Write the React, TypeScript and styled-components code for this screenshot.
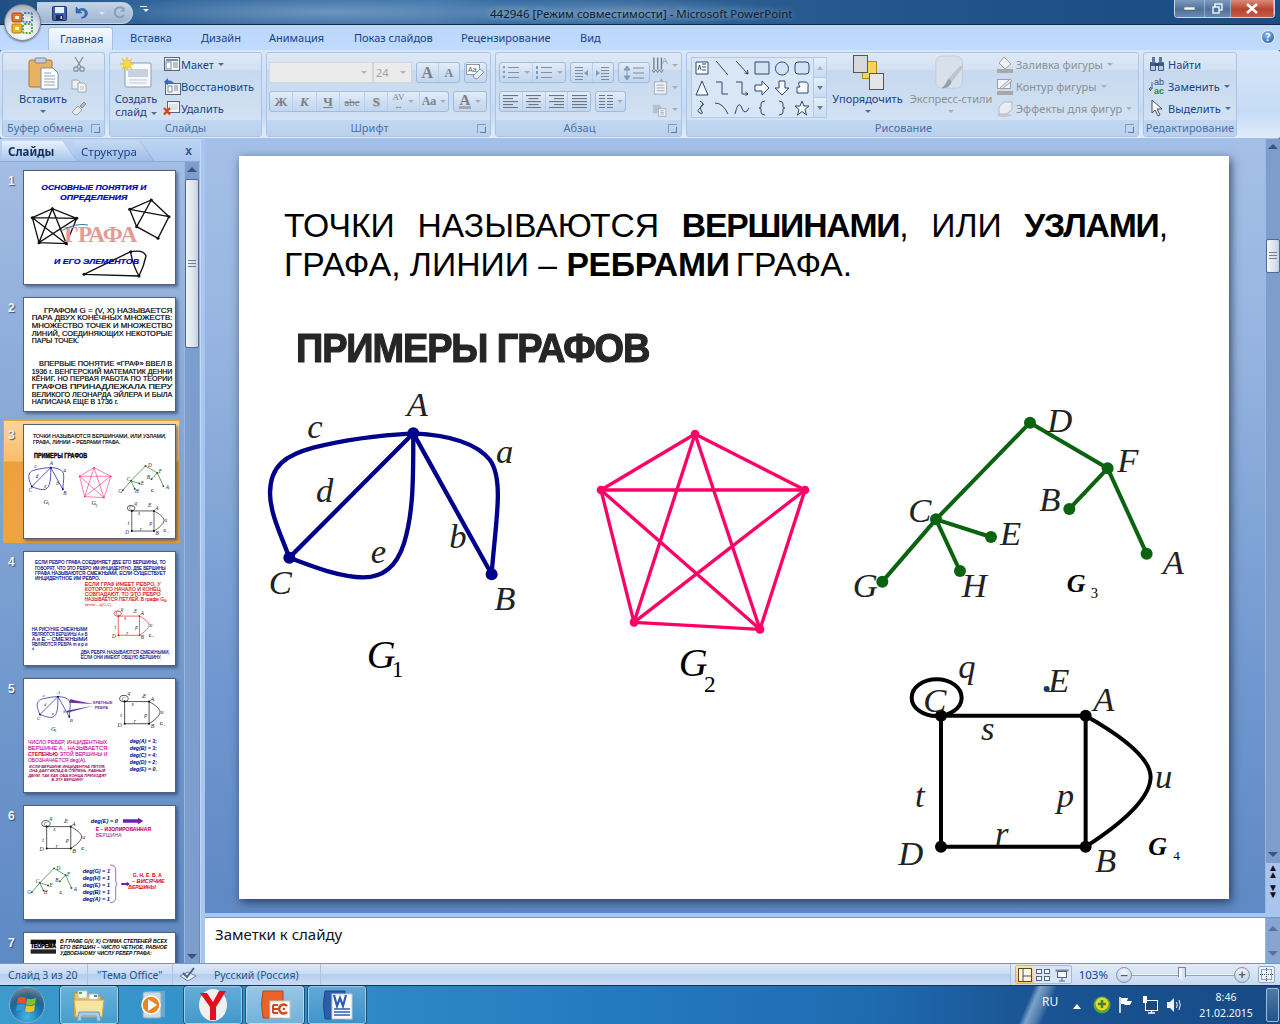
import React from "react";
import styled, { createGlobalStyle } from "styled-components";

const UI = `"Noto Sans", "Liberation Sans", sans-serif`;
const SERIF = `"Liberation Serif", serif`;
const SANS = `"Liberation Sans", sans-serif`;

const Global = createGlobalStyle`
  html, body { margin: 0; padding: 0; background: #2a6fb0; overflow: hidden; }
  #root { width: 1280px; height: 1024px; }
  * { box-sizing: border-box; }
`;

const Root = styled.div`
  width: 1280px; height: 1024px; display: flex; flex-direction: column; overflow: hidden; position: relative;
  font: 11px ${UI}; color: #15428b;
`;

/* ---------- title bar ---------- */
const TitleBar = styled.div`
  height: 25px; flex: none; display: flex; align-items: flex-start; border-bottom: 1px solid #12294a;
  background:
    radial-gradient(ellipse 240px 16px at 330px 12px, rgba(150,180,215,.55), transparent),
    radial-gradient(ellipse 170px 14px at 620px 12px, rgba(190,215,240,.35), transparent),
    linear-gradient(90deg, #1f4f83 0%, #34689c 14%, #3f74a8 34%, #2b5e92 55%, #1f5288 78%, #1b4c82 100%);
`;
const Orb = styled.div`
  position: absolute; left: 4px; top: 4px; width: 37px; height: 37px; border-radius: 50%; z-index: 3;
  display: flex; align-items: center; justify-content: center;
  background: radial-gradient(circle at 50% 75%, #ffffff 0%, #dfe6ee 45%, #aeb9c6 75%, #8594a6 100%);
  border: 1px solid #6f8096; box-shadow: 0 1px 2px rgba(0,0,0,.4);
`;
const Qat = styled.div`
  margin: 2px 0 0 37px; width: 96px; height: 22px; display: flex; align-items: center; padding-left: 15px; gap: 7px;
  border: 1px solid rgba(200,215,235,.7); border-left: none; border-radius: 0 11px 11px 0;
  background: linear-gradient(#c4d3e6, #9db4d0);
`;
const QatMore = styled.div`margin: 6px 0 0 6px; width: 9px; display: flex; flex-direction: column; gap: 2px; align-items: center; &::before { content: ""; width: 7px; height: 1px; background: #e6eef8; }`;
const TitleText = styled.div`
  margin: 6px 0 0 342px; font: 11.5px ${UI}; color: #0c1c33; line-height: 16px; white-space: nowrap;
  text-shadow: 0 0 6px rgba(255,255,255,.55);
`;
const WinCtl = styled.div`
  margin: 0 5px 0 auto; display: flex; width: 101px; height: 18px; border: 1px solid #c8d4e2; border-top: none;
  border-radius: 0 0 4px 4px; overflow: hidden;
`;
const WinBtn = styled.div<{ $w: number; $red?: boolean }>`
  width: ${p => p.$w}px; display: flex; align-items: center; justify-content: center;
  border-right: 1px solid rgba(255,255,255,.35);
  background: ${p => p.$red ? "linear-gradient(#d88a78, #b9432e 55%, #c9594a)" : "linear-gradient(#7d9cbd, #4e7199 55%, #6a8bb0)"};
`;

/* ---------- tabs ---------- */
const TabBar = styled.div`
  height: 25px; flex: none; display: flex; align-items: flex-end; padding-left: 48px; position: relative;
  background: linear-gradient(#bcd6f8, #bfdbff);
`;
const Tab = styled.div<{ $w: number; $on?: boolean }>`
  width: ${p => p.$w}px; height: 23px; padding-left: 12px; line-height: 22px; font-size: 11px; color: #15428b; flex: none;
  ${p => p.$on ? `background: linear-gradient(#f4f9ff, #dbe8f8); border: 1px solid #a3bfe2; border-bottom: none; border-radius: 3px 3px 0 0; padding-left: 11px; margin-right: 5px;` : ""}
`;
const Help = styled.div`
  position: absolute; right: 5px; top: 5px; width: 14px; height: 14px; border-radius: 50%; background: radial-gradient(circle at 40% 30%, #8ab7ea, #1c56a8);
  border: 1px solid #e8f1fb; color: #fff; font: bold 10px/12px ${UI}; text-align: center;
`;

/* ---------- ribbon ---------- */
const Ribbon = styled.div`
  height: 89px; flex: none; display: flex; gap: 4px; padding: 2px; border-bottom: 1px solid #a4c0e6;
  background: linear-gradient(#d7e6f9, #c5dbf5 70%, #e0ecfb);
  border-radius: 3px;
`;
const Group = styled.div<{ $w: number }>`
  width: ${p => p.$w}px; height: 85px; display: flex; flex-direction: column; position: relative; overflow: hidden;
  border: 1px solid #a9c4e6; border-radius: 3px;
  background: linear-gradient(#dfe9f6 0%, #d3e1f2 20%, #c7d9ef 21%, #d6e4f4 100%);
`;
const GroupBody = styled.div<{ $pl?: number }>`
  flex: 1; display: flex; padding-left: ${p => p.$pl ?? 0}px; min-height: 0;
`;
const GroupLabel = styled.div<{ $launch?: boolean }>`
  height: 16px; flex: none; text-align: center; line-height: 15px; font-size: 11px; color: #4a70a8;
  padding-right: ${p => p.$launch ? 18 : 0}px;
  background: linear-gradient(#c2d8f1, #b9d1ee);
`;
const GroupLabelLeft = styled(GroupLabel)`text-align: left; padding-left: 4px;`;
const Launcher = styled.div`
  position: absolute; right: 4px; bottom: 3px; width: 9px; height: 9px; border: 1px solid #7e9cc2; border-width: 1px 0 0 1px;
  &::after { content: ""; position: absolute; right: 0; bottom: 0; width: 5px; height: 5px; border-right: 1px solid #5d7fac; border-bottom: 1px solid #5d7fac; }
`;
const BigBtn = styled.div<{ $w: number; $off?: boolean }>`
  width: ${p => p.$w}px; flex: none; display: flex; flex-direction: column; align-items: center; padding-top: 2px;
  font-size: 11px; line-height: 13px; color: ${p => p.$off ? "#8b8f95" : "#15428b"}; white-space: nowrap;
`;
const BigIcon = styled.div`height: 36px; display: flex; align-items: center; justify-content: center; margin-bottom: 1px;`;
const Caret = styled.span<{ $c?: string }>`
  display: inline-block; width: 0; height: 0; border: 3px solid transparent; border-top: 3px solid ${p => p.$c ?? "#4a6da0"}; border-bottom: none; vertical-align: middle; margin-left: 4px;
`;
const CaretLine = styled.div`height: 12px; display: flex; align-items: center; justify-content: center; margin-left: -4px;`;
const SmallCol = styled.div<{ $ml?: number }>`display: flex; flex-direction: column; margin-left: ${p => p.$ml ?? 0}px;`;
const SmallRow = styled.div<{ $off?: boolean }>`
  height: 22px; display: flex; align-items: center; white-space: nowrap; font-size: 11px; color: ${p => p.$off ? "#8b8f95" : "#15428b"};
`;
const SmallIcon = styled.span<{ $w?: number }>`width: ${p => p.$w ?? 19}px; flex: none; display: flex; align-items: center; justify-content: center;`;

const Controls = styled.div<{ $pl: number }>`padding: 9px 0 0 ${p => p.$pl}px; display: flex; flex-direction: column; gap: 8px;`;
const CtlRow = styled.div<{ $gap?: number }>`display: flex; height: 21px; gap: ${p => p.$gap ?? 4}px;`;
const Combo = styled.div<{ $w: number }>`
  width: ${p => p.$w}px; height: 21px; background: #ebebeb; border: 1px solid #d0d6de; display: flex; align-items: center; justify-content: flex-end; padding-right: 5px;
  font-size: 11px; color: #a2a2a2;
`;
const ComboText = styled.span`margin-right: auto; padding-left: 2px;`;
const BtnBox = styled.div<{ $w: number }>`
  width: ${p => p.$w}px; height: 21px; display: flex; border: 1px solid #9dbce3; border-radius: 3px; overflow: hidden;
  background: linear-gradient(#e3edf9, #cfdff3 50%, #c3d7f0);
`;
const Cell = styled.div<{ $w?: number }>`
  ${p => p.$w ? `width:${p.$w}px;flex:none;` : "flex:1;"} display: flex; align-items: center; justify-content: center; border-right: 1px solid #b9cfea;
  color: #7c8087; font: 12px ${SERIF}; &:last-child { border-right: none; }
`;
const CellB = styled.span`font: bold 13px ${SERIF};`;
const CellI = styled.span`font: italic bold 13px ${SERIF};`;
const CellU = styled.span`font: bold 13px ${SERIF}; text-decoration: underline;`;
const CellS = styled.span`font: 11px ${SERIF}; text-decoration: line-through;`;
const CellSh = styled.span`font: bold 13px ${SERIF}; text-shadow: 1px 1px 1px #aaa;`;
const CellStack = styled.span`font: 9px/9px ${SERIF}; text-align: center;`;
const CellAa = styled.span`font: bold 12px ${SERIF};`;
const CellAbig = styled.span<{ $s: number }>`font: bold ${p => p.$s}px/14px ${SERIF}; color: #7c8087;`;
const ColorA = styled.span`font: bold 15px/12px ${SERIF}; border-bottom: 3px solid #a8a8a8; padding: 0 1px; color: #7c8087;`;

const ParaSide = styled.div`display: flex; flex-direction: column; padding: 1px 0 0 2px;`;
const SideBtn = styled.div`height: 22px; width: 26px; display: flex; align-items: center;`;

const Gallery = styled.div`
  width: 136px; height: 61px; margin-top: 4px; display: flex; border: 1px solid #b0c9e8; background: #d9e6f6; flex: none;
`;
const ShapeGrid = styled.div`display: grid; grid-template-columns: repeat(6, 20px); grid-auto-rows: 20px; flex: none; width: 121px;`;
const ShapeCell = styled.div`display: flex; align-items: center; justify-content: center;`;
const GalScroll = styled.div`flex: 1; display: flex; flex-direction: column; border-left: 1px solid #b0c9e8;`;
const GalBtn = styled.div`flex: 1; display: flex; align-items: center; justify-content: center; background: linear-gradient(#e6eff9,#c9dbf0); border-bottom: 1px solid #b0c9e8; &:last-child { border-bottom: none; }`;
const MiniTri = styled.span<{ $up?: boolean; $c?: string }>`
  width: 0; height: 0; border: 3px solid transparent;
  ${p => p.$up ? `border-bottom: 4px solid ${p.$c ?? "#a7b6c9"}; border-top: none;` : `border-top: 4px solid ${p.$c ?? "#5e7ea8"}; border-bottom: none;`}
`;

/* ---------- workspace ---------- */
const Workspace = styled.div`flex: 1; display: flex; min-height: 0;`;
const LeftPane = styled.div`width: 200px; flex: none; display: flex; flex-direction: column; background: #a6c3ec;`;
const PaneHead = styled.div`height: 23px; flex: none; display: flex; align-items: flex-end; padding-left: 2px; position: relative; background: linear-gradient(#bfd6f4, #a9c6ee); border-bottom: 1px solid #8cabd6;`;
const PaneTabWrap = styled.div<{ $ml?: number; $top?: boolean }>`
  filter: drop-shadow(0 0 .6px #4f70a4); margin-left: ${p => p.$ml ?? 0}px; position: relative; z-index: ${p => p.$top ? 2 : 1};
`;
const PaneTab = styled.div<{ $on?: boolean; $w: number }>`
  width: ${p => p.$w}px; height: 20px; font: ${p => p.$on ? "bold" : "normal"} 11.5px/22px ${UI}; color: ${p => p.$on ? "#15305c" : "#15428b"};
  padding-left: ${p => p.$on ? 6 : 7}px;
  clip-path: polygon(0 0, calc(100% - 14px) 0, 100% 100%, 0 100%);
  background: ${p => p.$on ? "linear-gradient(#e8f1fc, #a9c6ee)" : "linear-gradient(#c6d9f3, #9fbde8)"};
`;
const PaneClose = styled.div`position: absolute; right: 8px; top: 4px; font: bold 12px/16px ${SANS}; color: #30528a;`;
const PaneBody = styled.div`flex: 1; display: flex; min-height: 0; background: linear-gradient(#a3bee4, #8dacd9 25%, #6b94ca 75%, #5f89c3);`;
const ThumbList = styled.div`width: 184px; flex: none; overflow: hidden; padding-top: 8px;`;
const ThumbRow = styled.div<{ $on?: boolean }>`
  height: 115px; margin-bottom: 12px; display: flex; position: relative;
  ${p => p.$on ? `&::before { content: ""; position: absolute; left: 3px; right: 4px; top: -4px; bottom: -4px; border: 1px solid #e8a33c; background: linear-gradient(#ffd596 0%, #f9bd6a 33%, #eda03a 34%, #f0a441 100%); }` : ""}
`;
const ThumbNum = styled.div`
  width: 23px; padding: 4px 0 0 8px; font: bold 12px/14px ${SANS}; color: #eef3fa; position: relative; text-shadow: 1px 1px 1px rgba(40,60,100,.8);
`;
const Thumb = styled.div`
  width: 153px; height: 115px; background: #fff; flex: none; position: relative; border: 1px solid #52607a; box-shadow: 2px 2px 3px rgba(30,50,90,.55); overflow: hidden;
`;
const ThumbSvg = styled.svg`display: block; width: 151px; height: 113px;`;
const VScroll = styled.div`
  width: 15px; flex: none; display: flex; flex-direction: column; align-items: center; background: #7d9dcc; border-left: 1px solid #9bb8e0; position: relative;
`;
const SbArrow = styled.div<{ $up?: boolean; $c?: string }>`
  width: 15px; height: 14px; display: flex; align-items: center; justify-content: center; flex: none;
  &::before { content: ""; border: 5px solid transparent; ${p => p.$up ? `border-bottom: 5px solid ${p.$c ?? "#3d5478"}; border-top: none;` : `border-top: 5px solid ${p.$c ?? "#3d5478"}; border-bottom: none;`} }
`;
const SbThumb = styled.div<{ $h: number; $mt: number }>`
  width: 14px; height: ${p => p.$h}px; margin-top: ${p => p.$mt}px; flex: none; border: 1px solid #52688f; border-radius: 2px;
  background: linear-gradient(90deg, #f2f5fa, #dde4ee 60%, #c3cfe0); display: flex; align-items: center; justify-content: center;
`;
const Grip = styled.div`width: 8px; height: 8px; background: repeating-linear-gradient(#6d7e9a 0 1px, transparent 1px 3px);`;
const SbSpacer = styled.div`flex: 1;`;
const Splitter = styled.div`width: 5px; flex: none; background: #a9c6f0; border-left: 1px solid #c4d9f6;`;

const RightCol = styled.div`flex: 1; display: flex; flex-direction: column; min-width: 0;`;
const EditorRow = styled.div`height: 774px; flex: none; display: flex;`;
const Canvas = styled.div`flex: 1; padding: 17px 0 0 34px; background: linear-gradient(#a4c0e8, #97b5e0 25%, #7097cf 70%, #5f89c4);`;
const Slide = styled.div`
  width: 990px; height: 743px; background: #fff; box-shadow: 2px 3px 9px rgba(20,35,60,.75); padding: 50px 61px 0 45px; overflow: hidden;
`;
const SlideText = styled.p`
  margin: 0; font: 33.7px/39px ${SANS}; color: #000; text-align: justify;
`;
const Strong = styled.b`font-weight: bold; letter-spacing: -1.2px;`;
const TightB = styled.b`font-weight: bold; letter-spacing: -.3px; word-spacing: -3px;`;
const SlideHead = styled.h2`
  margin: 41px 0 0 12px; font: bold 41px/46px ${SANS}; color: #262626; letter-spacing: -1.2px; -webkit-text-stroke: 1.2px #262626; white-space: nowrap;
  transform: scaleX(.925); transform-origin: left center;
`;
const GraphSvg = styled.svg`display: block; width: 990px; height: 518px; margin: 10px 0 0 -45px;`;
const EditorScroll = styled(VScroll)`background: linear-gradient(#7d9dcc 0, #7d9dcc 93.6%, #a9c4ee 93.6%); border-left: 1px solid #9bb8e0;`;
const DoubleArrow = styled.div`
  height: 20px; width: 15px; flex: none; font: bold 10px/7px ${SANS}; color: #111; display: flex; flex-direction: column; align-items: center; justify-content: center;
`;
const BottomGap = styled.div`height: 12px; flex: none;`;
const HSplit = styled.div`height: 5px; flex: none; background: #a9c6f0; border-bottom: 1px solid #6e97d0;`;
const NotesRow = styled.div`flex: 1; display: flex; min-height: 0;`;
const Notes = styled.div`flex: 1; background: #fff; padding: 6px 0 0 10px; font: 15px/20px ${UI}; color: #111;`;
const NotesScroll = styled(VScroll)`background: #86a5d2; justify-content: space-between; padding: 3px 0;`;

/* ---------- status ---------- */
const Status = styled.div`
  height: 22px; flex: none; display: flex; align-items: stretch; border-top: 1px solid #6e97d0;
  background: linear-gradient(#dce8f8 0%, #c9dcf5 45%, #b6cfef 50%, #c9dcf5 100%); font-size: 10.5px; color: #274f8a;
`;
const StatusCell = styled.div<{ $w: number; $pl?: number; $gap?: number }>`
  width: ${p => p.$w}px; padding-left: ${p => p.$pl ?? 8}px; display: flex; align-items: center; gap: ${p => p.$gap ?? 0}px; border-right: 1px solid #a9c2e2; white-space: nowrap;
`;
const StatusRight = styled.div`margin-left: auto; width: 910px; display: flex; justify-content: flex-end;`;
const Zoomer = styled.div`width: 270px; display: flex; align-items: center; border-left: 1px solid #a9c2e2; padding-left: 4px; background: linear-gradient(#e0ebf9, #c7daf3);`;
const ViewBox = styled.div`width: 57px; height: 19px; flex: none; display: flex; border: 1px solid #9dbce3; border-radius: 2px; background: #d9e6f7;`;
const ViewBtn = styled.div<{ $on?: boolean }>`flex: 1; display: flex; align-items: center; justify-content: center; ${p => p.$on ? "background: linear-gradient(#ffe29c,#ffc65c);" : ""}`;
const ZoomPct = styled.span`width: 43px; text-align: right; padding-right: 8px; margin-left: 1px; font-size: 11.5px; color: #15428b; flex: none;`;
const RoundBtn = styled.div`width: 16px; height: 16px; border-radius: 50%; flex: none; border: 1px solid #7e97b8; background: radial-gradient(circle at 50% 30%, #f5f8fc, #b5c6dc); font: bold 13px/13px ${SANS}; text-align: center; color: #4d5d74;`;
const SliderTrack = styled.div`width: 102px; height: 2px; flex: none; background: #f2f6fc; border-bottom: 1px solid #8ba6c9; position: relative;`;
const SliderKnob = styled.div`position: absolute; left: 46px; top: -7px; width: 8px; height: 15px; background: linear-gradient(90deg,#fff,#cdd8e6); border: 1px solid #6d84a4; clip-path: polygon(0 0,100% 0,100% 65%,50% 100%,0 65%);`;
const FitBtn = styled.div`width: 17px; height: 17px; margin-left: 8px; flex: none; border: 1px solid #8ea9cc; border-radius: 2px; background: #eaf1fa; display: flex; align-items: center; justify-content: center;`;

/* ---------- taskbar ---------- */
const Taskbar = styled.div`
  height: 39px; flex: none; display: flex; align-items: stretch; border-top: 1px solid #16324f; position: relative; overflow: hidden;
  background:
    linear-gradient(113deg, transparent 79.8%, rgba(200,225,245,.55) 80.3%, rgba(255,255,255,.25) 81%, transparent 81.6%),
    linear-gradient(90deg, #3a9bcc 0%, #2f8cc8 25%, #2478bd 50%, #1f6bb0 68%, #1a5595 80%, #174a85 100%);
`;
const Start = styled.div`
  width: 36px; height: 36px; margin: 1px 15px 0 9px; flex: none; border-radius: 50%; display: flex; align-items: center; justify-content: center;
  background: radial-gradient(circle at 50% 85%, #45b6e8 0%, #1a6fa8 45%, #0c3558 80%, #0a2a46); border: 1px solid #7faecb; box-shadow: inset 0 10px 8px -6px rgba(255,255,255,.5);
`;
const TaskBtn = styled.div<{ $on?: boolean; $plain?: boolean; $w?: number; $mr?: number }>`
  width: ${p => p.$w ?? 58}px; margin-right: ${p => p.$mr ?? 4}px; display: flex; align-items: center; justify-content: center; flex: none;
  ${p => p.$plain ? "" : `border: 1px solid rgba(220,240,255,.55); outline: 1px solid rgba(10,40,70,.6); outline-offset: 0; border-radius: 3px;
  background: linear-gradient(rgba(255,255,255,${p.$on ? .5 : .25}), rgba(255,255,255,${p.$on ? .32 : .08}));`}
`;
const Tray = styled.div`margin-left: auto; display: flex; align-items: center; color: #fff;`;
const TrayLang = styled.div`width: 27px; font: 12px/14px ${UI}; color: #eef5fb; margin-bottom: 6px; margin-right: 4px;`;
const TrayIcon = styled.div`width: 24px; display: flex; align-items: center; justify-content: center;`;
const TrayTri = styled.div`width: 0; height: 0; border: 4px solid transparent; border-bottom: 5px solid #fff; border-top: none; margin-right: 9px; margin-top: 2px;`;
const Clock = styled.div`width: 78px; margin-left: 1px; text-align: center; font: 10.5px/16px ${UI}; color: #f2f7fc;`;
const ShowDesk = styled.div`width: 13px; height: 34px; margin: 0 1px; border: 1px solid #9cc0dc; border-radius: 2px; background: linear-gradient(rgba(255,255,255,.25), rgba(255,255,255,.05));`;

/* ---------- icons ---------- */
const OfficeLogo = () => (
  <svg width="27" height="27" viewBox="0 0 27 27">
    <rect x="3" y="4" width="10" height="9" rx="1.5" fill="#e8732c" stroke="#a5431a" />
    <rect x="6" y="7" width="4" height="3" fill="#fff2d8" />
    <rect x="14" y="4" width="9" height="9" rx="1.5" fill="none" stroke="#4e7fc0" strokeDasharray="2 1.2" strokeWidth="2" />
    <rect x="3" y="15" width="10" height="9" rx="1.5" fill="#f3b21f" stroke="#b07a10" />
    <rect x="6" y="18" width="4" height="3" fill="#fff2d8" />
    <rect x="14" y="15" width="9" height="9" rx="1.5" fill="none" stroke="#58a83a" strokeDasharray="2 1.2" strokeWidth="2" />
  </svg>
);
const SaveI = () => (
  <svg width="15" height="15" viewBox="0 0 15 15"><rect x=".5" y=".5" width="14" height="14" rx="1" fill="#3f5fa8" stroke="#1f3570" /><rect x="3" y="1" width="9" height="6" fill="#e8eef8" /><rect x="4" y="9" width="7" height="5" fill="#1a2c5c" /><rect x="8.5" y="10" width="1.5" height="3" fill="#d0d8e8" /></svg>
);
const UndoI = () => (
  <svg width="14" height="14" viewBox="0 0 14 14"><path d="M2 1 L2 7 L8 7 L5.7 4.8 C8 3.6 11 4.6 11 7.4 C11 9.5 9.5 11 7 12 C11 12.5 13.6 10 13.4 7 C13.2 3 8.5 1 4.6 3.6 Z" fill="#2e6fc4" stroke="#1d4a90" strokeWidth=".5" /></svg>
);
const RedoI = () => (
  <svg width="14" height="14" viewBox="0 0 14 14"><path d="M11.5 3 A5 5 0 1 0 12 9" fill="none" stroke="#8c9cb2" strokeWidth="2" /><path d="M12.5 1 V5.5 H8 Z" fill="#8c9cb2" /></svg>
);
const Paste = () => (
  <svg width="31" height="33" viewBox="0 0 31 33">
    <rect x="1" y="3" width="23" height="27" rx="2" fill="#e8b265" stroke="#a9793a" />
    <rect x="7" y="1" width="11" height="5" rx="1" fill="#c9ced6" stroke="#7d8794" />
    <path d="M13 11 H25 L30 16 V32 H13 Z" fill="#fff" stroke="#7b8da8" />
    <path d="M16 16 H23 M16 19 H27 M16 22 H27 M16 25 H27 M16 28 H27" stroke="#8fa0b8" />
  </svg>
);
const Scissors = () => (
  <svg width="14" height="16" viewBox="0 0 14 16" fill="none" stroke="#8b8f96" strokeWidth="1.3"><path d="M3 1 L9 11 M11 1 L5 11" /><circle cx="4" cy="13" r="2.2" /><circle cx="10" cy="13" r="2.2" /></svg>
);
const CopyI = () => (
  <svg width="16" height="14" viewBox="0 0 16 14"><path d="M1 1 H7 L9 3 V10 H1 Z" fill="#eceff3" stroke="#a4a8ae" /><path d="M7 4 H13 L15 6 V13 H7 Z" fill="#f6f7f9" stroke="#a4a8ae" /><path d="M9 8 H13 M9 10 H13" stroke="#bbb" /></svg>
);
const Painter = () => (
  <svg width="16" height="15" viewBox="0 0 16 15"><path d="M1 11 L7 5 L11 9 L6 14 Q3 14 1 11Z" fill="#e6e8ec" stroke="#a0a4aa" /><path d="M9 5 L13 1 L15 3 L11 7Z" fill="#b3b6bb" stroke="#8f9297" /></svg>
);
const NewSlide = () => (
  <svg width="32" height="33" viewBox="0 0 32 33">
    <rect x="5" y="6" width="26" height="24" rx="1" fill="#f6f8fb" stroke="#8c9db5" />
    <rect x="8" y="12" width="20" height="8" fill="#c8d2df" />
    <path d="M9 23 H27 M9 26 H27" stroke="#c1c9d4" />
    <path d="M7 0 L8.5 4 L12 1.5 L10 5.5 L14 7 L10 8.500 L12 12.500 L8.500 10 L7 14 L5.500 10 L2 12.500 L4 8.500 L0 7 L4 5.500 L2 1.500 L5.500 4 Z" fill="#f7d843" stroke="#e0a91a" strokeWidth=".4" />
  </svg>
);
const LayoutI = () => (
  <svg width="16" height="14" viewBox="0 0 16 14"><rect x=".5" y=".5" width="15" height="13" fill="#f4f6f9" stroke="#55657c" /><rect x="2" y="2" width="12" height="2" fill="#7a8aa0" /><rect x="2" y="5" width="5" height="7" fill="#fff" stroke="#7a8aa0" /><path d="M9 6 H14 M9 8 H14 M9 10 H14" stroke="#7a8aa0" /></svg>
);
const ResetI = () => (
  <svg width="18" height="17" viewBox="0 0 18 17"><rect x="2.500" y="5.500" width="15" height="11" fill="#f4f6f9" stroke="#55657c" /><path d="M5 8 H9 V14 H5Z M11 8 H15 M11 10 H15 M11 12 H15" fill="#fff" stroke="#7a8aa0" /><path d="M1 4 L5 0 V2.500 Q10 2 11 6 Q8 4 5 5 V7.500Z" fill="#2d6cc0" /></svg>
);
const DeleteI = () => (
  <svg width="17" height="15" viewBox="0 0 17 15"><rect x="4.500" y=".5" width="12" height="11" fill="#f4f6f9" stroke="#55657c" /><path d="M6 3 H15 V9 H6Z" fill="#dfe4ea" /><path d="M1 7 L7 13.500 M7 7 L1 13.500" stroke="#d8401c" strokeWidth="2.200" /></svg>
);
const BulletI = ({ num }: { num?: boolean }) => (
  <svg width="18" height="13" viewBox="0 0 18 13">
    {[1, 6, 11].map(y => <React.Fragment key={y}>{num ? <rect x="1" y={y - 1} width="2" height="3" fill="#7c9bc5" /> : <circle cx="2" cy={y} r="1.200" fill="#7c9bc5" />}<rect x="6" y={y} width="11" height="1" fill="#858f9e" /></React.Fragment>)}
  </svg>
);
const IndentI = ({ rev }: { rev?: boolean }) => (
  <svg width="15" height="14" viewBox="0 0 15 14">
    {[1, 4, 7, 10, 13].map(y => <rect key={y} x={rev ? 1 : 6} y={y} width="8" height="1" fill="#7f8a9a" />)}
    <path d={rev ? "M14 4 L10 7 L14 10Z" : "M1 4 L5 7 L1 10Z"} fill="#7c9bc5" />
  </svg>
);
const LineSpI = () => (
  <svg width="22" height="16" viewBox="0 0 22 16"><path d="M4 1 L1 5 H7Z M4 15 L1 11 H7Z M4 5 V11" fill="#7c9bc5" stroke="#7c9bc5" /><path d="M10 3 H21 M10 8 H21 M10 13 H21" stroke="#7f8a9a" /></svg>
);
const DirI = () => (
  <svg width="17" height="18" viewBox="0 0 17 18"><path d="M2 1 V14 M6 1 V14 M10 1 V14" stroke="#6d7a8c" strokeWidth="1.400" /><text x="10.500" y="8" fontSize="9" fontFamily={SANS} fill="#8a94a3">A</text><path d="M0 14 L2 17 L4 14 M4 14 L6 17 L8 14 M8 14 L10 17 L12 14" fill="none" stroke="#6d7a8c" /></svg>
);
const AlignTextI = () => (
  <svg width="17" height="18" viewBox="0 0 17 18"><rect x="2.500" y="3.500" width="13" height="13" fill="#eef1f5" stroke="#a5adb8" /><path d="M5 7 H13 M5 10 H13 M5 13 H13" stroke="#9ca5b2" /><path d="M8 3 L10 0 L12 3Z" fill="#9ca5b2" /></svg>
);
const SmartI = () => (
  <svg width="19" height="19" viewBox="0 0 19 19"><path d="M1 4 H9 L12 7 V14 H1 Z" fill="#b7c1cd" /><rect x="7.500" y="8.500" width="9" height="9" fill="#eef1f5" stroke="#a5adb8" /><path d="M10 11 H14 M10 13 H14 M10 15 H14" stroke="#9ca5b2" /></svg>
);
const AlignI = ({ mode }: { mode: "l" | "c" | "r" | "j" }) => {
  const rows = [0, 1, 2, 3, 4];
  return (
    <svg width="15" height="13" viewBox="0 0 15 13">
      {rows.map(i => {
        const w = mode === "j" ? 15 : i % 2 ? 10 : 15;
        const x = mode === "r" ? 15 - w : mode === "c" ? (15 - w) / 2 : 0;
        return <rect key={i} x={x} y={i * 3} width={w} height="1.100" fill="#6d7480" />;
      })}
    </svg>
  );
};
const ColsI = () => (
  <svg width="14" height="13" viewBox="0 0 14 13">{[0, 3, 6, 9, 12].map(y => <React.Fragment key={y}><rect x="0" y={y} width="6" height="1" fill="#6d7480" /><rect x="8" y={y} width="6" height="1" fill="#6d7480" /></React.Fragment>)}</svg>
);
const ClearI = () => (
  <svg width="19" height="17" viewBox="0 0 19 17"><rect x=".5" y=".5" width="13" height="10" fill="#fbfcfe" stroke="#8b96a5" /><text x="2" y="8" fontSize="7" fontFamily={SANS} fill="#555">Aa</text><path d="M7 12 L14 5 L18 8 L11 15 Q8 15 7 12Z" fill="#e9eef5" stroke="#8b96a5" /></svg>
);
const ShapeI: React.FC<{ d: string; fill?: string; sw?: number }> = ({ d, fill = "none", sw = 1 }) => (
  <svg width="16" height="16" viewBox="0 0 16 16"><path d={d} fill={fill} stroke="#2c4870" strokeWidth={sw} strokeLinejoin="round" /></svg>
);
const SHAPES: { d: string; fill?: string }[] = [
  { d: "M2 2 H14 V14 H2 Z M8 4 H12 M8 7 H12 M8 10 H12 M4 10 L5.500 5 L7 10", fill: "#fff" },
  { d: "M2 1 L14 15" },
  { d: "M2 1 L14 14 M14 14 L10.500 13 M14 14 L13.500 10" },
  { d: "M1 2 H15 V14 H1 Z", fill: "#d2e3f6" },
  { d: "M8 2 A6.500 6.500 0 1 1 7.990 2 Z", fill: "#d2e3f6" },
  { d: "M4 2 H12 Q15 2 15 5 V11 Q15 14 12 14 H4 Q1 14 1 11 V5 Q1 2 4 2 Z", fill: "#d2e3f6" },
  { d: "M8 1 L14 15 H2 Z", fill: "#f6f9fd" },
  { d: "M2 2 H8 V14 H14" },
  { d: "M2 2 H8 V14 H14 M14 14 L11.500 12 M14 14 L11.500 15.500" },
  { d: "M1 5 H8 V1 L15 8 L8 15 V11 H1 Z", fill: "#f6f9fd" },
  { d: "M5 1 H11 V8 H15 L8 15 L1 8 H5 Z", fill: "#f6f9fd" },
  { d: "M5 2 H11 Q15 2 14 7 L14 13 H3 L3 7 L6 7 Q4 5 5 2 Z", fill: "#f6f9fd" },
  { d: "M6 1 Q12 4 6 8 Q2 11 6 13 Q10 15 7 10 Q5 6 10 4" },
  { d: "M1 3 Q9 3 14 14" },
  { d: "M1 14 Q4 1 7 6 Q9 12 11 12 Q13 12 15 8" },
  { d: "M11 1 Q7 1 7 4 V7 Q7 8 5 8 Q7 8 7 9 V12 Q7 15 11 15" },
  { d: "M5 1 Q9 1 9 4 V7 Q9 8 11 8 Q9 8 9 9 V12 Q9 15 5 15" },
  { d: "M8 1 L10 6 H15 L11 9.500 L12.500 15 L8 11.500 L3.500 15 L5 9.500 L1 6 H6 Z", fill: "#f6f9fd" },
];
const ArrangeI = () => (
  <svg width="32" height="36" viewBox="0 0 32 36">
    <rect x="10.500" y="6.500" width="14" height="17" fill="#f7d35e" stroke="#b08b20" />
    <rect x="1.500" y=".5" width="14" height="17" fill="#d5d8dc" stroke="#555" />
    <rect x="17.500" y="18.500" width="14" height="16" fill="#e3e5e8" stroke="#555" />
  </svg>
);
const StylesI = () => (
  <svg width="34" height="36" viewBox="0 0 34 38">
    <rect x="1" y="1" width="28" height="34" rx="7" fill="#d8e0ea" stroke="#c2ccd8" />
    <path d="M30 13 L18 28 L14 25 L27 11 Z" fill="#bcc6d2" />
    <path d="M14 25 L18 28 Q15 36 7 35 Q12 31 14 25 Z" fill="#96a0ad" />
  </svg>
);
const FillI = () => (
  <svg width="18" height="17" viewBox="0 0 18 17"><path d="M8 1 L15 8 L9 13 L3 7 Z" fill="#f0f2f5" stroke="#9a9ea5" /><rect x="1" y="13" width="16" height="4" fill="#a8a8a8" /></svg>
);
const OutlineI = () => (
  <svg width="18" height="17" viewBox="0 0 18 17"><rect x="1.500" y="1.500" width="13" height="9" fill="#f3f5f8" stroke="#9a9ea5" /><path d="M4 10 L14 1 L16 3 L6 11 Z" fill="#e8e8e8" stroke="#9a9ea5" /><rect x="1" y="13" width="16" height="4" fill="#a8a8a8" /></svg>
);
const EffectI = () => (
  <svg width="18" height="17" viewBox="0 0 18 17"><ellipse cx="8" cy="15" rx="7" ry="2" fill="#c4cbd4" /><path d="M3 7 L8 2 L16 2 L16 9 L11 14 L3 14 Z" fill="#e9ecf0" stroke="#b2b8c0" /></svg>
);
const FindI = () => (
  <svg width="16" height="16" viewBox="0 0 16 16"><rect x="1" y="6" width="6" height="9" rx="1" fill="#3f5a85" /><rect x="9" y="6" width="6" height="9" rx="1" fill="#3f5a85" /><rect x="3" y="1" width="3" height="6" fill="#5b76a2" /><rect x="10" y="1" width="3" height="6" fill="#5b76a2" /><rect x="6" y="7" width="4" height="3" fill="#2f476c" /><rect x="2" y="10" width="4" height="4" fill="#b7cbe6" /><rect x="10" y="10" width="4" height="4" fill="#b7cbe6" /></svg>
);
const ReplaceI = () => (
  <svg width="18" height="18" viewBox="0 0 18 18"><text x="6" y="8" fontSize="9" fontFamily={SANS} fill="#3b4b66">ab</text><text x="6" y="17" fontSize="9" fontWeight="bold" fontFamily={SANS} fill="#2d8a2d">ac</text><path d="M4 5 V12 H1 M1 12 L3 10 M1 12 L3 14" fill="none" stroke="#2b5fa5" /></svg>
);
const SelectI = () => (
  <svg width="14" height="18" viewBox="0 0 14 18"><path d="M2 1 V14 L5 11 L8 17 L10 16 L7 10 L12 10 Z" fill="#fff" stroke="#3c4c64" /></svg>
);
const ViewNormal = () => (
  <svg width="14" height="14" viewBox="0 0 14 14"><rect x=".5" y=".5" width="13" height="13" fill="#fff8e8" stroke="#55483a" /><path d="M5 1 V13 M5 8 H13" stroke="#55483a" /></svg>
);
const ViewSorter = () => (
  <svg width="14" height="14" viewBox="0 0 14 14" fill="#f2f6fb" stroke="#55657c"><rect x=".5" y="1.500" width="5" height="4" /><rect x="8.500" y="1.500" width="5" height="4" /><rect x=".5" y="8.500" width="5" height="4" /><rect x="8.500" y="8.500" width="5" height="4" /></svg>
);
const ViewShow = () => (
  <svg width="14" height="14" viewBox="0 0 14 14"><rect x=".5" y="1.500" width="13" height="2" fill="#7a8698" /><rect x="2.500" y="3.500" width="9" height="6" fill="#f4f6fa" stroke="#55657c" /><path d="M7 10 V13 M4 13 H10" stroke="#55657c" /></svg>
);
const FitI = () => (
  <svg width="13" height="13" viewBox="0 0 13 13" stroke="#3d4e68" strokeDasharray="1 1"><path d="M6.500 0 V13 M0 6.500 H13" /><rect x="1.500" y="1.500" width="10" height="10" fill="none" /></svg>
);
const Spell = () => (
  <svg width="18" height="16" viewBox="0 0 18 16"><path d="M1 9 L9 5 L17 9 L9 14 Z" fill="#e8eef7" stroke="#6d7f9c" /><path d="M4 6 L8 10 L15 1" fill="none" stroke="#49648f" strokeWidth="2" /></svg>
);
const WinFlag = () => (
  <svg width="22" height="22" viewBox="0 0 22 22">
    <path d="M2 4 Q6 2 10 4 L9 10 Q5 8.500 1 10 Z" fill="#e9512a" />
    <path d="M11 4.500 Q15 6 20 4 L19 10 Q15 12 10 10.500 Z" fill="#85bf34" />
    <path d="M1 11 Q5 9.500 9 11 L8 17 Q4 15.500 0 17 Z" fill="#2f98de" />
    <path d="M10 11.500 Q15 13 19 11 L18 17 Q14 19 9 17.500 Z" fill="#f6c21c" />
  </svg>
);
const FolderI = () => (
  <svg width="32" height="33" viewBox="0 0 32 33">
    <path d="M1 4 H11 L14 7 H28 V28 H1 Z" fill="#e8c35a" stroke="#b58f2c" />
    <rect x="5" y="2" width="9" height="7" fill="#fdfdf8" stroke="#c2c2b0" />
    <rect x="6" y="3" width="3" height="2" fill="#4caf50" />
    <rect x="16" y="5" width="9" height="6" fill="#fdfdf8" stroke="#c2c2b0" />
    <rect x="21" y="6" width="3" height="2" fill="#3a8ae0" />
    <path d="M1 11 H31 L29 28 H3 Z" fill="#f7e4a0" stroke="#c9a84a" />
    <path d="M6 23 H26 L28 32 H24 L23 27 H9 L8 32 H4 Z" fill="#a7cde8" stroke="#6f9cc0" />
  </svg>
);
const WmpI = () => (
  <svg width="32" height="32" viewBox="0 0 32 32">
    <rect x="11" y="2" width="17" height="26" fill="#8ab8d8" opacity=".6" />
    <rect x="6" y="3" width="18" height="26" rx="2" fill="#c9dbe8" stroke="#8ea9bd" />
    <circle cx="14" cy="16" r="9" fill="#ee8420" stroke="#fff" strokeWidth="1.500" />
    <path d="M11 10 L20 16 L11 22 Z" fill="#fff" />
  </svg>
);
const YandexI = () => (
  <svg width="32" height="34" viewBox="0 0 32 34">
    <ellipse cx="16" cy="17" rx="14" ry="16" fill="#f0f0f0" />
    <path d="M3 5 H10 L16 14 L22 3 H29 L19 19 V32 H13 V19 Z" fill="#e3101c" />
  </svg>
);
const PptI = () => (
  <svg width="32" height="33" viewBox="0 0 32 33">
    <path d="M4 2 H24 V29 H4 Q1 15 4 2 Z" fill="#e9622a" stroke="#b5461a" />
    <rect x="11" y="12" width="20" height="17" fill="#fbfbfb" stroke="#c7c7c7" />
    <path d="M14 16 H19 M14 20 H19 M14 24 H19 M14 16 V24" stroke="#d4481c" strokeWidth="2" fill="none" />
    <path d="M28 17 A4.500 4.500 0 1 0 28 23" fill="none" stroke="#d4481c" strokeWidth="2.500" />
    <circle cx="25" cy="20" r="1.300" fill="#d4481c" />
  </svg>
);
const WordI = () => (
  <svg width="32" height="33" viewBox="0 0 32 33">
    <path d="M4 2 H24 V30 H4 Q1 15 4 2 Z" fill="#2b5fae" stroke="#1f4586" />
    <rect x="11" y="5" width="20" height="25" fill="#fbfbfb" stroke="#c7c7c7" />
    <path d="M13 6 L16 17 L19 9 L22 17 L25 6" fill="none" stroke="#2b5fae" strokeWidth="2.200" />
    <path d="M13 20 H29 M13 23 H29 M13 26 H29" stroke="#2b5fae" strokeWidth="1.500" />
  </svg>
);
const PlusTray = () => (
  <svg width="18" height="18" viewBox="0 0 18 18"><circle cx="9" cy="9" r="8.500" fill="#4caf3a" /><circle cx="9" cy="8" r="6.500" fill="#f2d32c" /><path d="M9 4 V12 M5 8 H13" stroke="#2e8a24" strokeWidth="2.500" /></svg>
);
const FlagTray = () => (
  <svg width="16" height="18" viewBox="0 0 16 18"><path d="M2 1 V17" stroke="#fff" strokeWidth="1.500" /><path d="M3 2 H10 L9 5 H14 L12 9 H6 L7 8 H3 Z" fill="#fff" /></svg>
);
const NetTray = () => (
  <svg width="17" height="18" viewBox="0 0 17 18"><rect x="3.500" y="4.500" width="12" height="10" fill="#16497f" stroke="#fff" /><path d="M6 17 H13 M9.500 15 V17" stroke="#fff" strokeWidth="1.300" /><rect x="1" y="0" width="4" height="7" fill="#fff" /></svg>
);
const SoundTray = () => (
  <svg width="17" height="16" viewBox="0 0 17 16"><path d="M1 5 H4 L8 1 V15 L4 11 H1 Z" fill="#eef3f8" /><path d="M10.500 5 Q12 8 10.500 11 M13 3 Q15.500 8 13 13" fill="none" stroke="#eef3f8" /></svg>
);

/* ---------- graphs (coordinates are in a 3× grid, scaled down by each group) ---------- */
const Lbl: React.FC<{ x: number; y: number; s?: number; b?: boolean; up?: boolean; fill?: string; children: React.ReactNode }> = ({ x, y, s = 104, b, up, fill = "#222", children }) => (
  <text x={x} y={y} fontSize={s} fontFamily={SERIF} fontStyle={up ? "normal" : "italic"} fontWeight={b ? "bold" : "normal"} fill={fill}>{children}</text>
);
const Edge: React.FC<{ a: number[]; b: number[] }> = ({ a, b }) => <line x1={a[0]} y1={a[1]} x2={b[0]} y2={b[1]} />;

type GP = { color?: string };
const G1: React.FC<GP> = ({ color = "#00008b" }) => {
  const A = [490, 160], C = [118, 533], B = [725, 583];
  return (
    <g transform="translate(11,224) scale(.3333)">
      <g fill="none" stroke={color} strokeWidth="13">
        <path d="M118,533 C95,470 60,400 60,340 C60,255 110,225 190,203 C280,180 400,165 490,160" />
        <path d="M490,160 C600,165 680,190 720,240 C745,275 745,330 743,370 C740,440 730,510 725,583" />
        <path d="M118,533 C190,560 270,592 340,592 C400,592 440,560 462,490 C490,400 490,300 490,160" />
        <Edge a={C} b={A} /><Edge a={A} b={B} />
      </g>
      <g fill={color}><circle cx={A[0]} cy={A[1]} r="18" /><circle cx={C[0]} cy={C[1]} r="18" /><circle cx={B[0]} cy={B[1]} r="18" /></g>
      <Lbl x={470} y={108}>A</Lbl><Lbl x={172} y={175}>c</Lbl><Lbl x={198} y={365}>d</Lbl><Lbl x={738} y={248}>a</Lbl>
      <Lbl x={362} y={550}>e</Lbl><Lbl x={598} y={505}>b</Lbl><Lbl x={56} y={643}>C</Lbl><Lbl x={733} y={690}>B</Lbl>
      <Lbl x={350} y={865} s={120} fill="#000">G</Lbl><Lbl x={425} y={890} s={70} up fill="#000">1</Lbl>
    </g>
  );
};
const G2: React.FC = () => {
  const v = [[345, 42], [675, 210], [540, 628], [162, 607], [63, 210]];
  const c = "#ff0066";
  return (
    <g transform="translate(341,264) scale(.3333)">
      <g stroke={c} strokeWidth="10">
        {v.flatMap((p, i) => v.slice(i + 1).map((q, j) => <Edge key={`${i}-${j}`} a={p} b={q} />))}
      </g>
      <g fill={c}>{v.map((p, i) => <circle key={i} cx={p[0]} cy={p[1]} r="13" />)}</g>
      <Lbl x={296} y={768} s={120} fill="#000">G</Lbl><Lbl x={372} y={815} s={70} up fill="#000">2</Lbl>
    </g>
  );
};
const G3: React.FC = () => {
  const D = [570, 68], F = [803, 205], C = [288, 358], B = [688, 327], E = [453, 411], A = [920, 461], Gn = [127, 545], H = [360, 513];
  const c = "#0a640f";
  return (
    <g transform="translate(601,244) scale(.3333)">
      <g stroke={c} strokeWidth="12">
        <Edge a={D} b={C} /><Edge a={D} b={F} /><Edge a={F} b={B} /><Edge a={F} b={A} /><Edge a={C} b={E} /><Edge a={C} b={Gn} /><Edge a={C} b={H} />
      </g>
      <g fill={c}>{[D, F, C, B, E, A, Gn, H].map((p, i) => <circle key={i} cx={p[0]} cy={p[1]} r="18" />)}</g>
      <Lbl x={622} y={97}>D</Lbl><Lbl x={832} y={215}>F</Lbl><Lbl x={205} y={365}>C</Lbl><Lbl x={598} y={333}>B</Lbl>
      <Lbl x={480} y={435}>E</Lbl><Lbl x={365} y={590}>H</Lbl><Lbl x={38} y={590}>G</Lbl><Lbl x={968} y={521}>A</Lbl>
      <Lbl x={680} y={575} s={78} b fill="#000">G</Lbl><Lbl x={752} y={595} s={44} up fill="#000">3</Lbl>
    </g>
  );
};
const G4: React.FC<GP> = ({ color = "#000" }) => {
  const C = [183, 197], A = [617, 197], B = [617, 590], D = [183, 590];
  return (
    <g transform="translate(641,494) scale(.3333)">
      <g fill="none" stroke={color} strokeWidth="12">
        <ellipse cx="170" cy="143" rx="75" ry="55" />
        <Edge a={C} b={A} /><Edge a={A} b={B} /><Edge a={B} b={D} /><Edge a={D} b={C} />
        <path d="M617,197 C720,255 810,320 812,380 C812,450 710,530 617,590" />
      </g>
      <g fill={color}>{[C, A, B, D].map((p, i) => <circle key={i} cx={p[0]} cy={p[1]} r="18" />)}</g>
      <circle cx="500" cy="117" r="9" fill="#1f3864" />
      <Lbl x={235} y={85}>q</Lbl><Lbl x={130} y={185}>C</Lbl><Lbl x={505} y={125}>E</Lbl><Lbl x={640} y={182}>A</Lbl>
      <Lbl x={303} y={270}>s</Lbl><Lbl x={105} y={470}>t</Lbl><Lbl x={530} y={470}>p</Lbl><Lbl x={825} y={415}>u</Lbl>
      <Lbl x={345} y={585}>r</Lbl><Lbl x={55} y={645}>D</Lbl><Lbl x={645} y={665}>B</Lbl>
      <Lbl x={805} y={615} s={78} b fill="#000">G</Lbl><Lbl x={880} y={630} s={40} up fill="#000">4</Lbl>
    </g>
  );
};

/* ---------- thumbnails: coordinates in a 3× grid of the thumb ---------- */
const TT: React.FC<{ x: number; y: number; w?: number; s?: number; f?: string; b?: boolean; i?: boolean; mid?: boolean; sw?: number; children: React.ReactNode }> = ({ x, y, w, s = 13, f = "#000", b, i, mid, sw = 0, children }) => (
  <text x={x} y={y} textLength={w} lengthAdjust={w ? "spacingAndGlyphs" : undefined} fontSize={s} fill={f} stroke={sw ? f : "none"} strokeWidth={sw}
    fontWeight={b ? "bold" : "normal"} fontStyle={i ? "italic" : "normal"} textAnchor={mid ? "middle" : "start"} fontFamily={SANS}>{children}</text>
);
const ThumbFrame: React.FC<{ children: React.ReactNode }> = ({ children }) => (
  <ThumbSvg viewBox="0 0 453 339">{children}</ThumbSvg>
);

const Thumb1 = () => (
  <ThumbFrame>
    <g transform="translate(-70,-30)">
      <TT x={122} y={86} w={315} s={24} f="#0000c0" b i sw={.6}>ОСНОВНЫЕ ПОНЯТИЯ И</TT>
      <TT x={178} y={116} w={202} s={24} f="#0000c0" b i sw={.6}>ОПРЕДЕЛЕНИЯ</TT>
      <g stroke="#111" strokeWidth="4" fill="none">
        <path d="M95,170 L155,143 L228,172 L197,248 L115,245 Z M95,170 L228,172 L115,245 L155,143 L197,248 Z" />
        <path d="M387,145 L452,117 L505,167 L472,232 L408,197 Z M387,145 L505,167 M452,117 L408,197" />
        <path d="M250,340 L390,272 Q430,265 436,285 Q430,315 415,345 Q395,310 390,272 M250,340 L415,345" />
      </g>
      <g fill="#111">{[[95, 170], [155, 143], [228, 172], [197, 248], [115, 245], [387, 145], [452, 117], [505, 167], [472, 232], [408, 197], [250, 340], [390, 272], [415, 345]].map((p, i) => <circle key={i} cx={p[0]} cy={p[1]} r="4.500" />)}</g>
      <text x="190" y="243" fontSize="70" fontFamily={SERIF} fontWeight="bold" fill="#e59a94" textLength="220">ГРАФА</text>
      <path d="M185,208 Q225,185 262,192" fill="none" stroke="#2d74b8" strokeWidth="3" />
      <TT x={160} y={308} w={255} s={24} f="#0000c0" b i sw={.6}>И ЕГО ЭЛЕМЕНТОВ</TT>
    </g>
  </ThumbFrame>
);
const Thumb2 = () => {
  const l: [number, number, string, number][] = [
    [130, 450, "ГРАФОМ G = (V, X) НАЗЫВАЕТСЯ", 515], [93, 473, "ПАРА ДВУХ КОНЕЧНЫХ МНОЖЕСТВ:", 515], [93, 496, "МНОЖЕСТВО ТОЧЕК И МНОЖЕСТВО", 515],
    [93, 519, "ЛИНИЙ, СОЕДИНЯЮЩИХ НЕКОТОРЫЕ", 515], [93, 542, "ПАРЫ ТОЧЕК.", 235], [115, 610, "ВПЕРВЫЕ ПОНЯТИЕ «ГРАФ» ВВЕЛ В", 515],
    [93, 633, "1936 г. ВЕНГЕРСКИЙ МАТЕМАТИК ДЕННИ", 515], [93, 656, "КЁНИГ. НО ПЕРВАЯ РАБОТА ПО ТЕОРИИ", 515], [93, 679, "ГРАФОВ ПРИНАДЛЕЖАЛА ПЕРУ", 515],
    [93, 702, "ВЕЛИКОГО ЛЕОНАРДА ЭЙЛЕРА И БЫЛА", 515], [93, 725, "НАПИСАНА ЕЩЕ В 1736 г.", 353],
  ];
  return (
    <ThumbFrame>
      <g transform="translate(-70,-412)">
        {l.map(([x, y, t, e], i) => <TT key={i} x={x} y={y + 6} w={e - x} s={19} sw={.5}>{t}</TT>)}
      </g>
    </ThumbFrame>
  );
};
const Thumb3 = () => (
  <ThumbFrame>
    <TT x={27} y={40} w={400} s={15} sw={.4}>ТОЧКИ НАЗЫВАЮТСЯ ВЕРШИНАМИ, ИЛИ УЗЛАМИ,</TT>
    <TT x={27} y={58} w={262} s={15} sw={.4}>ГРАФА, ЛИНИИ – РЕБРАМИ ГРАФА.</TT>
    <TT x={30} y={98} w={160} s={19} b sw={1}>ПРИМЕРЫ ГРАФОВ</TT>
    <g transform="scale(.4606)"><G1 /><G2 /><G3 /><G4 /></g>
  </ThumbFrame>
);
const Thumb4 = () => (
  <ThumbFrame>
    <g transform="translate(-70,-35)">
      {["ЕСЛИ РЕБРО ГРАФА СОЕДИНЯЕТ ДВЕ ЕГО ВЕРШИНЫ, ТО", "ГОВОРЯТ, ЧТО ЭТО РЕБРО ИМ ИНЦИДЕНТНО. ДВЕ ВЕРШИНЫ", "ГРАФА НАЗЫВАЮТСЯ СМЕЖНЫМИ, ЕСЛИ СУЩЕСТВУЕТ"].map((t, i) =>
        <TT key={i} x={103} y={72 + i * 16} w={392} s={14} f="#000080" sw={.4}>{t}</TT>)}
      <TT x={103} y={119} w={195} s={14} f="#000080" sw={.4}>ИНЦИДЕНТНОЕ ИМ РЕБРО.</TT>
      {["ЕСЛИ ГРАФ ИМЕЕТ РЕБРО, У", "КОТОРОГО НАЧАЛО И КОНЕЦ", "СОВПАДАЮТ, ТО ЭТО РЕБРО", "НАЗЫВАЕТСЯ ПЕТЛЕЙ. В графе G₄,"].map((t, i) =>
        <TT key={i} x={252} y={138 + i * 15} w={i === 3 ? 248 : 228} s={14} f="#e00000" sw={.3}>{t}</TT>)}
      <TT x={252} y={198} s={12} f="#e00000">петля – q(C,C).</TT>
      <g transform="translate(96,315) scale(.44)"><G1 /></g>
      <g transform="translate(44,-19) scale(.44)"><G4 color="#e60000" /></g>
      {["НА РИСУНКЕ СМЕЖНЫМИ", "ЯВЛЯЮТСЯ ВЕРШИНЫ A и B", "A и E – СМЕЖНЫМИ", "ЯВЛЯЮТСЯ РЕБРА m и p и"].map((t, i) =>
        <TT key={i} x={93} y={273 + i * 15} w={167} s={14} f="#000080" sw={.3}>{t}</TT>)}
      <TT x={93} y={330} s={12} f="#000080">d</TT>
      <TT x={240} y={342} w={267} s={14} f="#000080" sw={.3}>ДВА РЕБРА НАЗЫВАЮТСЯ СМЕЖНЫМИ,</TT>
      <TT x={240} y={357} w={242} s={14} f="#000080" sw={.3}>ЕСЛИ ОНИ ИМЕЮТ ОБЩУЮ ВЕРШИНУ.</TT>
    </g>
  </ThumbFrame>
);
const Thumb5 = () => (
  <ThumbFrame>
    <g transform="translate(-70,-417)">
      <g transform="translate(96,349) scale(.435)"><G1 /></g>
      <path d="M208,478 L278,492 L206,488 Z M198,512 L278,497 L200,518 Z" fill="#7030a0" />
      <TT x={277} y={491} s={12} f="#7030a0" b>КРАТНЫЕ</TT>
      <TT x={282} y={507} s={12} f="#7030a0" b>РЕБРА</TT>
      <g transform="translate(16,201) scale(.507)"><G4 /></g>
      <TT x={82} y={613} w={238} s={17} f="#cc0099" sw={.3}>ЧИСЛО РЕБЕР, ИНЦИДЕНТНЫХ</TT>
      <TT x={82} y={631} w={238} s={17} f="#cc0099" sw={.3}>ВЕРШИНЕ  А , НАЗЫВАЕТСЯ</TT>
      <TT x={82} y={648} w={238} s={17} f="#cc0099" sw={.3}><tspan fill="#e00030" fontWeight="bold">СТЕПЕНЬЮ</tspan> ЭТОЙ ВЕРШИНЫ И</TT>
      <TT x={82} y={667} w={175} s={17} f="#cc0099" sw={.3}>ОБОЗНАЧАЕТСЯ deg(A).</TT>
      {([["ЕСЛИ ВЕРШИНЕ ИНЦИДЕНТНА ПЕТЛЯ,", 685, 228], ["ОНА ДАЕТ ВКЛАД В СТЕПЕНЬ, РАВНЫЙ", 697, 228], ["ДВУМ, ТАК КАК ОБА КОНЦА ПРИХОДЯТ", 710, 235], ["В ЭТУ ВЕРШИНУ", 722, 95]] as [string, number, number][]).map(([t, y, w], i) =>
        <TT key={i} x={200 - w / 2} y={y} w={w} s={12} f="#a00060" i b>{t}</TT>)}
      {["deg(A) = 3;", "deg(B) = 3;", "deg(C) = 4;", "deg(D) = 2;", "deg(E) = 0."].map((t, i) =>
        <TT key={i} x={387} y={610 + i * 21} w={82} s={17} f="#000080" b i>{t}</TT>)}
    </g>
  </ThumbFrame>
);
const Thumb6 = () => (
  <ThumbFrame>
    <g transform="translate(-70,-798)">
      <g transform="translate(-213,580) scale(.5)"><G4 /></g>
      <TT x={270} y={849} w={82} s={17} f="#000080" b i>deg(E) = 0</TT>
      <path d="M367,838 H412 V833 L428,843 L412,853 V848 H367 Z" fill="#7020b0" />
      <TT x={285} y={872} w={166} s={16} f="#cc0066" b sw={.3}>E – ИЗОЛИРОВАННАЯ</TT>
      <TT x={285} y={891} w={78} s={15} f="#a020a0">ВЕРШИНА</TT>
      <g transform="translate(-196,865) scale(.45)"><G3 /></g>
      {["deg(G) = 1", "deg(H) = 1", "deg(E) = 1", "deg(B) = 1", "deg(A) = 1"].map((t, i) =>
        <TT key={i} x={246} y={1000 + i * 21} w={82} s={17} f="#000080" b i>{t}</TT>)}
      <path d="M328,975 Q345,975 345,990 V1020 Q345,1032 350,1032 Q345,1032 345,1044 V1073 Q345,1088 328,1088" fill="none" stroke="#7020b0" strokeWidth="2" />
      <path d="M362,1029 H378 V1025 L388,1032 L378,1039 V1035 H362 Z" fill="#7020b0" />
      <TT x={440} y={1010} s={15} f="#e00000" b mid>G, H, E, B, A</TT>
      <TT x={443} y={1028} s={17} f="#e00000" b i mid>– ВИСЯЧИЕ</TT>
      <TT x={424} y={1046} s={15} f="#e00000" b i mid>ВЕРШИНЫ</TT>
    </g>
  </ThumbFrame>
);
const Thumb7 = () => (
  <ThumbFrame>
    <g transform="translate(-70,-1178)">
      <rect x="90" y="1198" width="76" height="12" fill="#111" />
      <TT x={90} y={1223} w={76} s={19} b sw={1.500}>ТЕОРЕМА</TT>
      <rect x="90" y="1227" width="76" height="13" fill="#222" />
      <TT x={178} y={1208} w={322} s={15} i b>В ГРАФЕ G(V, X) СУММА СТЕПЕНЕЙ ВСЕХ</TT>
      <TT x={178} y={1226} w={322} s={15} i b>ЕГО ВЕРШИН – ЧИСЛО ЧЕТНОЕ, РАВНОЕ</TT>
      <TT x={178} y={1244} w={275} s={15} i b>УДВОЕННОМУ ЧИСЛУ РЕБЕР ГРАФА:</TT>
    </g>
  </ThumbFrame>
);

const THUMBS = [Thumb1, Thumb2, Thumb3, Thumb4, Thumb5, Thumb6, Thumb7];

const TABS: [string, number][] = [["Вставка", 71], ["Дизайн", 68], ["Анимация", 85], ["Показ слайдов", 107], ["Рецензирование", 119], ["Вид", 60]];

export default function App() {
  return (
    <Root>
      <Global />
      <Orb><OfficeLogo /></Orb>
      <TitleBar>
        <Qat><SaveI /><UndoI /><Caret $c="#dde6f2" /><RedoI /></Qat>
        <QatMore><Caret $c="#e6eef8" /></QatMore>
        <TitleText>442946 [Режим совместимости] - Microsoft PowerPoint</TitleText>
        <WinCtl>
          <WinBtn $w={31}><svg width="11" height="4"><rect width="11" height="3" fill="#fff" stroke="#444" strokeWidth=".5" /></svg></WinBtn>
          <WinBtn $w={26}><svg width="11" height="11" viewBox="0 0 11 11" fill="none" stroke="#fff" strokeWidth="1.300"><rect x="3" y="1" width="7" height="6" /><rect x="1" y="4" width="6" height="6" fill="#4e7199" /></svg></WinBtn>
          <WinBtn $w={44} $red><svg width="12" height="11" viewBox="0 0 12 11"><path d="M1 1 L11 10 M11 1 L1 10" stroke="#fff" strokeWidth="2.600" /></svg></WinBtn>
        </WinCtl>
      </TitleBar>

      <TabBar>
        <Tab $w={65} $on>Главная</Tab>
        {TABS.map(([t, w]) => <Tab key={t} $w={w}>{t}</Tab>)}
        <Help>?</Help>
      </TabBar>

      <Ribbon>
        <Group $w={103}>
          <GroupBody $pl={10}>
            <BigBtn $w={60}>
              <BigIcon><Paste /></BigIcon>
              <span>Вставить</span>
              <CaretLine><Caret /></CaretLine>
            </BigBtn>
            <SmallCol $ml={-4}>
              <SmallRow><SmallIcon $w={20}><Scissors /></SmallIcon></SmallRow>
              <SmallRow><SmallIcon $w={20}><CopyI /></SmallIcon></SmallRow>
              <SmallRow><SmallIcon $w={20}><Painter /></SmallIcon></SmallRow>
            </SmallCol>
          </GroupBody>
          <GroupLabelLeft>Буфер обмена</GroupLabelLeft>
          <Launcher />
        </Group>

        <Group $w={153}>
          <GroupBody>
            <BigBtn $w={52}>
              <BigIcon><NewSlide /></BigIcon>
              <span>Создать</span>
              <span>слайд<Caret /></span>
            </BigBtn>
            <SmallCol>
              <SmallRow><SmallIcon><LayoutI /></SmallIcon>Макет<Caret /></SmallRow>
              <SmallRow><SmallIcon><ResetI /></SmallIcon>Восстановить</SmallRow>
              <SmallRow><SmallIcon><DeleteI /></SmallIcon>Удалить</SmallRow>
            </SmallCol>
          </GroupBody>
          <GroupLabel>Слайды</GroupLabel>
        </Group>

        <Group $w={225}>
          <Controls $pl={2}>
            <CtlRow>
              <CtlRow $gap={0}>
                <Combo $w={104}><Caret $c="#b5b5b5" /></Combo>
                <Combo $w={39}><ComboText>24</ComboText><Caret $c="#b5b5b5" /></Combo>
              </CtlRow>
              <BtnBox $w={44}><Cell><CellAbig $s={16}>A</CellAbig></Cell><Cell><CellAbig $s={12}>A</CellAbig></Cell></BtnBox>
              <BtnBox $w={23}><Cell><ClearI /></Cell></BtnBox>
            </CtlRow>
            <CtlRow>
              <BtnBox $w={180}>
                <Cell $w={23}><CellB>Ж</CellB></Cell>
                <Cell $w={24}><CellI>К</CellI></Cell>
                <Cell $w={23}><CellU>Ч</CellU></Cell>
                <Cell $w={25}><CellS>abc</CellS></Cell>
                <Cell $w={23}><CellSh>S</CellSh></Cell>
                <Cell $w={32}><CellStack>AV<br />↔</CellStack><Caret $c="#a9adb3" /></Cell>
                <Cell><CellAa>Aa</CellAa><Caret $c="#a9adb3" /></Cell>
              </BtnBox>
              <BtnBox $w={34}><Cell><ColorA>A</ColorA><Caret $c="#a9adb3" /></Cell></BtnBox>
            </CtlRow>
          </Controls>
          <GroupBody />
          <GroupLabel $launch>Шрифт</GroupLabel>
          <Launcher />
        </Group>

        <Group $w={187}>
          <GroupBody>
            <Controls $pl={3}>
              <CtlRow $gap={4}>
                <BtnBox $w={67}>
                  <Cell><BulletI /><Caret $c="#a9adb3" /></Cell>
                  <Cell><BulletI num /><Caret $c="#a9adb3" /></Cell>
                </BtnBox>
                <BtnBox $w={44}><Cell><IndentI rev /></Cell><Cell><IndentI /></Cell></BtnBox>
                <BtnBox $w={32}><Cell><LineSpI /></Cell></BtnBox>
              </CtlRow>
              <CtlRow $gap={4}>
                <BtnBox $w={92}>
                  <Cell><AlignI mode="l" /></Cell><Cell><AlignI mode="c" /></Cell><Cell><AlignI mode="r" /></Cell><Cell><AlignI mode="j" /></Cell>
                </BtnBox>
                <BtnBox $w={31}><Cell><ColsI /><Caret $c="#a9adb3" /></Cell></BtnBox>
              </CtlRow>
            </Controls>
            <ParaSide>
              <SideBtn><DirI /><Caret $c="#a9adb3" /></SideBtn>
              <SideBtn><AlignTextI /><Caret $c="#a9adb3" /></SideBtn>
              <SideBtn><SmartI /><Caret $c="#a9adb3" /></SideBtn>
            </ParaSide>
          </GroupBody>
          <GroupLabel $launch>Абзац</GroupLabel>
          <Launcher />
        </Group>

        <Group $w={453}>
          <GroupBody $pl={4}>
            <Gallery>
              <ShapeGrid>
                {SHAPES.map((s, i) => <ShapeCell key={i}><ShapeI d={s.d} fill={s.fill} /></ShapeCell>)}
              </ShapeGrid>
              <GalScroll>
                <GalBtn><MiniTri $up /></GalBtn>
                <GalBtn><MiniTri /></GalBtn>
                <GalBtn><MiniTri /></GalBtn>
              </GalScroll>
            </Gallery>
            <BigBtn $w={81}>
              <BigIcon><ArrangeI /></BigIcon>
              <span>Упорядочить</span>
              <CaretLine><Caret /></CaretLine>
            </BigBtn>
            <BigBtn $w={86} $off>
              <BigIcon><StylesI /></BigIcon>
              <span>Экспресс-стили</span>
              <CaretLine><Caret $c="#a9adb3" /></CaretLine>
            </BigBtn>
            <SmallCol>
              <SmallRow $off><SmallIcon $w={22}><FillI /></SmallIcon>Заливка фигуры<Caret $c="#a9adb3" /></SmallRow>
              <SmallRow $off><SmallIcon $w={22}><OutlineI /></SmallIcon>Контур фигуры<Caret $c="#a9adb3" /></SmallRow>
              <SmallRow $off><SmallIcon $w={22}><EffectI /></SmallIcon>Эффекты для фигур<Caret $c="#a9adb3" /></SmallRow>
            </SmallCol>
          </GroupBody>
          <GroupLabel $launch>Рисование</GroupLabel>
          <Launcher />
        </Group>

        <Group $w={94}>
          <GroupBody $pl={2}>
            <SmallCol>
              <SmallRow><SmallIcon $w={22}><FindI /></SmallIcon>Найти</SmallRow>
              <SmallRow><SmallIcon $w={22}><ReplaceI /></SmallIcon>Заменить<Caret /></SmallRow>
              <SmallRow><SmallIcon $w={22}><SelectI /></SmallIcon>Выделить<Caret /></SmallRow>
            </SmallCol>
          </GroupBody>
          <GroupLabel>Редактирование</GroupLabel>
        </Group>
      </Ribbon>

      <Workspace>
        <LeftPane>
          <PaneHead>
            <PaneTabWrap $top><PaneTab $on $w={75}>Слайды</PaneTab></PaneTabWrap>
            <PaneTabWrap $ml={-3}><PaneTab $w={80}>Структура</PaneTab></PaneTabWrap>
            <PaneClose>x</PaneClose>
          </PaneHead>
          <PaneBody>
            <ThumbList>
              {THUMBS.map((T, i) => (
                <ThumbRow key={i} $on={i === 2}>
                  <ThumbNum>{i + 1}</ThumbNum>
                  <Thumb><T /></Thumb>
                </ThumbRow>
              ))}
            </ThumbList>
            <VScroll>
              <SbArrow $up />
              <SbThumb $h={169} $mt={3}><Grip /></SbThumb>
              <SbSpacer />
              <SbArrow />
            </VScroll>
          </PaneBody>
        </LeftPane>
        <Splitter />
        <RightCol>
          <EditorRow>
            <Canvas>
              <Slide>
                <SlideText>
                  ТОЧКИ НАЗЫВАЮТСЯ <Strong>ВЕРШИНАМИ</Strong>, ИЛИ <Strong>УЗЛАМИ</Strong>, ГРАФА, ЛИНИИ – <TightB>РЕБРАМИ </TightB>ГРАФА.
                </SlideText>
                <SlideHead>ПРИМЕРЫ ГРАФОВ</SlideHead>
                <GraphSvg viewBox="0 225 990 518">
                  <G1 /><G2 /><G3 /><G4 />
                </GraphSvg>
              </Slide>
            </Canvas>
            <EditorScroll>
              <SbArrow $up />
              <SbThumb $h={34} $mt={86}><Grip /></SbThumb>
              <SbSpacer />
              <SbArrow $c="#3d5478" />
              <DoubleArrow>▲<br />▲</DoubleArrow>
              <DoubleArrow>▼<br />▼</DoubleArrow>
              <BottomGap />
            </EditorScroll>
          </EditorRow>
          <HSplit />
          <NotesRow>
            <Notes>Заметки к слайду</Notes>
            <NotesScroll>
              <SbArrow $up $c="#5b7096" />
              <SbArrow $c="#5b7096" />
            </NotesScroll>
          </NotesRow>
        </RightCol>
      </Workspace>

      <Status>
        <StatusCell $w={88}>Слайд 3 из 20</StatusCell>
        <StatusCell $w={85} $pl={9}>"Тема Office"</StatusCell>
        <StatusCell $w={148} $pl={6} $gap={17}><Spell />Русский (Россия)</StatusCell>
        <StatusRight>
          <Zoomer>
            <ViewBox>
              <ViewBtn $on><ViewNormal /></ViewBtn>
              <ViewBtn><ViewSorter /></ViewBtn>
              <ViewBtn><ViewShow /></ViewBtn>
            </ViewBox>
            <ZoomPct>103%</ZoomPct>
            <RoundBtn>–</RoundBtn>
            <SliderTrack><SliderKnob /></SliderTrack>
            <RoundBtn>+</RoundBtn>
            <FitBtn><FitI /></FitBtn>
          </Zoomer>
        </StatusRight>
      </Status>

      <Taskbar>
        <Start><WinFlag /></Start>
        <TaskBtn><FolderI /></TaskBtn>
        <TaskBtn $plain $w={62} $mr={0}><WmpI /></TaskBtn>
        <TaskBtn><YandexI /></TaskBtn>
        <TaskBtn $on><PptI /></TaskBtn>
        <TaskBtn><WordI /></TaskBtn>
        <Tray>
          <TrayLang>RU</TrayLang>
          <TrayTri />
          <TrayIcon><PlusTray /></TrayIcon>
          <TrayIcon><FlagTray /></TrayIcon>
          <TrayIcon><NetTray /></TrayIcon>
          <TrayIcon><SoundTray /></TrayIcon>
          <Clock>8:46<br />21.02.2015</Clock>
          <ShowDesk />
        </Tray>
      </Taskbar>
    </Root>
  );
}
